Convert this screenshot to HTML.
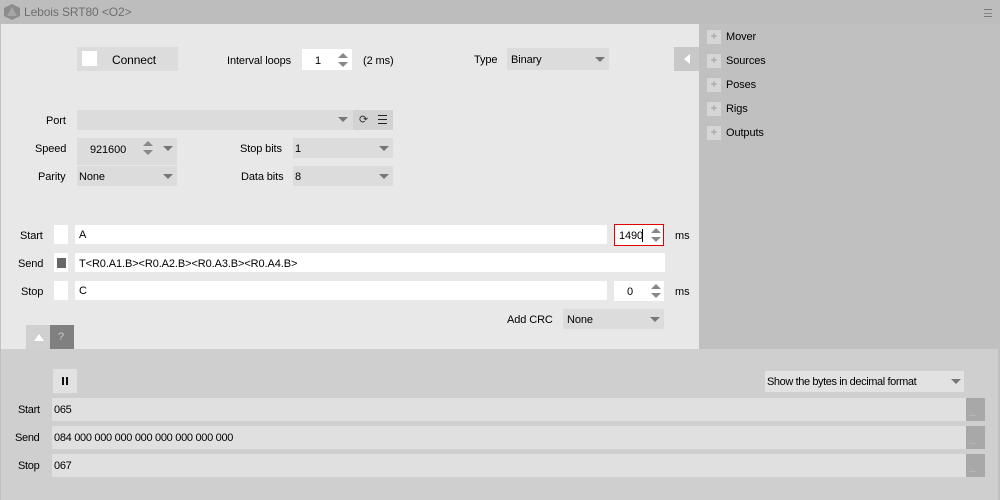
<!DOCTYPE html>
<html><head><meta charset="utf-8"><style>
*{margin:0;padding:0;box-sizing:border-box}
body{width:1000px;height:500px;overflow:hidden;background:#c0c0c0;font-family:"Liberation Sans",sans-serif;font-size:11px;letter-spacing:-0.1px;color:#000;position:relative}
.a{position:absolute}
.t{position:absolute;line-height:14px;white-space:nowrap}
.dd{position:absolute;background:#dcdcdc}
.arr{position:absolute;width:0;height:0;border-left:5px solid transparent;border-right:5px solid transparent;border-top:5px solid #777}
.up{position:absolute;width:0;height:0;border-left:5px solid transparent;border-right:5px solid transparent;border-bottom:5px solid #888}
.dn{position:absolute;width:0;height:0;border-left:5px solid transparent;border-right:5px solid transparent;border-top:5px solid #888}
.w{position:absolute;background:#fff}
.plus{position:absolute;width:14px;height:14px;background:#d6d6d6;color:#999;font-size:12px;line-height:13px;text-align:center}
</style></head><body>
<div class="a" style="left:0;top:0;width:1000px;height:24px;background:#bdbdbd"></div>
<svg class="a" style="left:3px;top:3px" width="18" height="18"><polygon points="9,1 17,5 17,13 9,17 1,13 1,5" fill="#8c8c8c"/><polygon points="9,4 14,13 4,13" fill="#a5a5a5"/></svg>
<div class="t" style="left:24px;top:5px;color:#6e6e6e;font-size:12px">Lebois SRT80 &lt;O2&gt;</div>
<div class="a" style="left:984px;top:9px;width:8px;height:1px;background:#777"></div>
<div class="a" style="left:984px;top:13px;width:8px;height:1px;background:#888"></div>
<div class="a" style="left:984px;top:16px;width:8px;height:1px;background:#777"></div>

<div class="a" style="left:1px;top:24px;width:698px;height:326px;background:#e8e8e8"></div>

<div class="dd" style="left:77px;top:47px;width:101px;height:24px"></div>
<div class="w" style="left:82px;top:51px;width:15px;height:15px"></div>
<div class="t" style="left:112px;top:53px;font-size:12px">Connect</div>

<div class="t" style="left:227px;top:54px">Interval loops</div>
<div class="w" style="left:302px;top:49px;width:50px;height:21px"></div>
<div class="t" style="left:315px;top:54px">1</div>
<div class="up" style="left:338px;top:53px"></div><div class="dn" style="left:338px;top:62px"></div>
<div class="t" style="left:363px;top:54px">(2 ms)</div>

<div class="t" style="left:474px;top:53px">Type</div>
<div class="dd" style="left:507px;top:48px;width:102px;height:22px"></div>
<div class="t" style="left:511px;top:53px">Binary</div>
<div class="arr" style="left:595px;top:57px"></div>

<div class="a" style="left:674px;top:47px;width:25px;height:24px;background:#c8c8c8"></div>
<div class="a" style="left:684px;top:54px;width:0;height:0;border-top:5px solid transparent;border-bottom:5px solid transparent;border-right:6px solid #fff"></div>

<div class="t" style="left:46px;top:114px">Port</div>
<div class="dd" style="left:77px;top:110px;width:276px;height:20px"></div>
<div class="arr" style="left:338px;top:117px"></div>
<div class="a" style="left:353px;top:110px;width:40px;height:20px;background:#d2d2d2"></div>
<div class="t" style="left:359px;top:113px;color:#333;font-size:11px">⟳</div>
<div class="a" style="left:378px;top:115px;width:9px;height:1px;background:#222"></div>
<div class="a" style="left:378px;top:119px;width:9px;height:1px;background:#222"></div>
<div class="a" style="left:378px;top:123px;width:9px;height:1px;background:#222"></div>

<div class="t" style="left:35px;top:142px">Speed</div>
<div class="dd" style="left:77px;top:138px;width:100px;height:27px"></div>
<div class="t" style="left:90px;top:143px">921600</div>
<div class="up" style="left:143px;top:141px"></div><div class="dn" style="left:143px;top:150px"></div>
<div class="arr" style="left:163px;top:146px"></div>
<div class="t" style="left:240px;top:142px">Stop bits</div>
<div class="dd" style="left:293px;top:138px;width:100px;height:20px"></div>
<div class="t" style="left:295px;top:142px">1</div>
<div class="arr" style="left:379px;top:146px"></div>

<div class="t" style="left:38px;top:170px">Parity</div>
<div class="dd" style="left:77px;top:166px;width:100px;height:20px"></div>
<div class="t" style="left:79px;top:170px">None</div>
<div class="arr" style="left:163px;top:174px"></div>
<div class="t" style="left:241px;top:170px">Data bits</div>
<div class="dd" style="left:293px;top:166px;width:100px;height:20px"></div>
<div class="t" style="left:295px;top:170px">8</div>
<div class="arr" style="left:379px;top:174px"></div>

<div class="t" style="left:20px;top:229px">Start</div>
<div class="w" style="left:54px;top:225px;width:14px;height:19px"></div>
<div class="w" style="left:75px;top:225px;width:532px;height:19px"></div>
<div class="t" style="left:79px;top:228px">A</div>
<div class="w" style="left:614px;top:224px;width:50px;height:22px;border:1px solid #e00000"></div>
<div class="t" style="left:619px;top:229px">1490</div>
<div class="a" style="left:642px;top:229px;width:1px;height:13px;background:#000"></div>
<div class="up" style="left:651px;top:228px"></div><div class="dn" style="left:651px;top:237px"></div>
<div class="t" style="left:675px;top:229px">ms</div>

<div class="t" style="left:18px;top:257px">Send</div>
<div class="w" style="left:54px;top:253px;width:14px;height:19px"></div>
<div class="a" style="left:57px;top:258px;width:9px;height:10px;background:#666"></div>
<div class="w" style="left:75px;top:253px;width:590px;height:19px"></div>
<div class="t" style="left:79px;top:257px">T&lt;R0.A1.B&gt;&lt;R0.A2.B&gt;&lt;R0.A3.B&gt;&lt;R0.A4.B&gt;</div>

<div class="t" style="left:21px;top:285px">Stop</div>
<div class="w" style="left:54px;top:281px;width:14px;height:19px"></div>
<div class="w" style="left:75px;top:281px;width:532px;height:19px"></div>
<div class="t" style="left:79px;top:284px">C</div>
<div class="w" style="left:614px;top:281px;width:50px;height:20px"></div>
<div class="t" style="left:627px;top:285px">0</div>
<div class="up" style="left:651px;top:284px"></div><div class="dn" style="left:651px;top:293px"></div>
<div class="t" style="left:675px;top:285px">ms</div>

<div class="t" style="left:507px;top:313px">Add CRC</div>
<div class="dd" style="left:563px;top:309px;width:101px;height:20px"></div>
<div class="t" style="left:567px;top:313px">None</div>
<div class="arr" style="left:650px;top:317px"></div>

<div class="a" style="left:26px;top:325px;width:24px;height:24px;background:#d0d0d0"></div>
<div class="a" style="left:34px;top:334px;width:0;height:0;border-left:5px solid transparent;border-right:5px solid transparent;border-bottom:7px solid #fff"></div>
<div class="a" style="left:50px;top:325px;width:24px;height:24px;background:#808080"></div>
<div class="t" style="left:58px;top:330px;color:#ccc">?</div>

<div class="plus" style="left:707px;top:30px">+</div><div class="t" style="left:726px;top:30px">Mover</div>
<div class="plus" style="left:707px;top:54px">+</div><div class="t" style="left:726px;top:54px">Sources</div>
<div class="plus" style="left:707px;top:78px">+</div><div class="t" style="left:726px;top:78px">Poses</div>
<div class="plus" style="left:707px;top:102px">+</div><div class="t" style="left:726px;top:102px">Rigs</div>
<div class="plus" style="left:707px;top:126px">+</div><div class="t" style="left:726px;top:126px">Outputs</div>

<div class="a" style="left:1px;top:349px;width:997px;height:151px;background:#cfcfcf"></div>
<div class="a" style="left:53px;top:369px;width:24px;height:24px;background:#e2e2e2"></div>
<div class="a" style="left:62px;top:377px;width:2px;height:8px;background:#111"></div>
<div class="a" style="left:66px;top:377px;width:2px;height:8px;background:#111"></div>

<div class="a" style="left:765px;top:371px;width:199px;height:21px;background:#e2e2e2"></div>
<div class="t" style="left:767px;top:375px;font-size:11px;letter-spacing:-0.4px">Show the bytes in decimal format</div>
<div class="arr" style="left:951px;top:379px"></div>

<div class="t" style="left:18px;top:403px;letter-spacing:-0.3px">Start</div>
<div class="a" style="left:52px;top:398px;width:914px;height:23px;background:#e0e0e0"></div>
<div class="t" style="left:54px;top:403px;letter-spacing:-0.3px">065</div>
<div class="a" style="left:966px;top:398px;width:19px;height:23px;background:#a8a8a8"></div>
<div class="t" style="left:969px;top:406px;color:#ccc;font-size:9px">...</div>

<div class="t" style="left:15px;top:431px;letter-spacing:-0.3px">Send</div>
<div class="a" style="left:52px;top:426px;width:914px;height:23px;background:#e0e0e0"></div>
<div class="t" style="left:54px;top:431px;letter-spacing:-0.3px">084 000 000 000 000 000 000 000 000</div>
<div class="a" style="left:966px;top:426px;width:19px;height:23px;background:#a8a8a8"></div>
<div class="t" style="left:969px;top:434px;color:#ccc;font-size:9px">...</div>

<div class="t" style="left:18px;top:459px;letter-spacing:-0.3px">Stop</div>
<div class="a" style="left:52px;top:454px;width:914px;height:23px;background:#e0e0e0"></div>
<div class="t" style="left:54px;top:459px;letter-spacing:-0.3px">067</div>
<div class="a" style="left:966px;top:454px;width:19px;height:23px;background:#a8a8a8"></div>
<div class="t" style="left:969px;top:462px;color:#ccc;font-size:9px">...</div>
</body></html>
